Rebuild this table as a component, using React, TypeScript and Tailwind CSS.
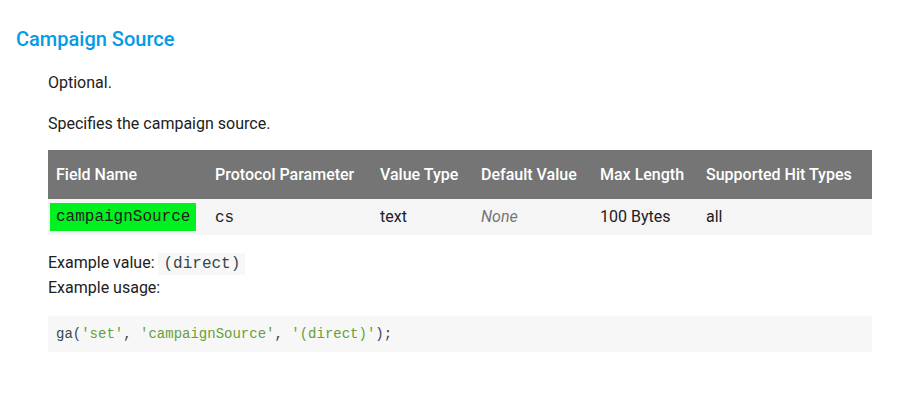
const cols = [
  { head: 'Field Name', w: 'w-[159px]' },
  { head: 'Protocol Parameter', w: 'w-[165px]' },
  { head: 'Value Type', w: 'w-[101px]' },
  { head: 'Default Value', w: 'w-[119px]' },
  { head: 'Max Length', w: 'w-[106px]' },
  { head: 'Supported Hit Types', w: '' },
]

export default function App() {
  return (
    <div className="min-h-[397px] bg-white font-['Roboto',sans-serif] text-[16px] text-[#212121]">
      <div className="pt-[27px] pl-4">
        <h3 className="text-[20px] font-medium leading-6 text-[#039be5]">Campaign Source</h3>
      </div>
      <div className="pl-12 pr-[25px]">
        <p className="mt-[20px] leading-6">Optional.</p>
        <p className="mt-[17px] leading-6">Specifies the campaign source.</p>

        <table className="mt-[14px] w-full border-collapse text-left">
          <thead>
            <tr className="h-[49px] bg-[#757575] text-white">
              {cols.map((c) => (
                <th key={c.head} className={`${c.w} px-2 font-medium`}>
                  {c.head}
                </th>
              ))}
            </tr>
          </thead>
          <tbody>
            <tr className="h-[36px] bg-[#f5f5f5]">
              <td className="px-[2px]">
                <code className="inline-block bg-[#00f020] px-[6px] py-[3px] font-['Liberation_Mono',monospace] text-[16px] leading-[22px] text-[#212121]">
                  campaignSource
                </code>
              </td>
              <td className="px-2">
                <code className="font-['Liberation_Mono',monospace] text-[16px]">cs</code>
              </td>
              <td className="px-2">text</td>
              <td className="px-2 italic text-[#757575]">None</td>
              <td className="px-2">100 Bytes</td>
              <td className="px-2">all</td>
            </tr>
          </tbody>
        </table>

        <div className="mt-[16px] leading-6">
          <div>
            Example value:{' '}
            <code className="bg-[#f7f7f7] px-[5px] py-[2px] font-['Liberation_Mono',monospace] text-[16px] text-[#37474f]">
              (direct)
            </code>
          </div>
          <div>Example usage:</div>
        </div>

        <pre className="mt-[16px] h-[36px] bg-[#f7f7f7] px-2 font-['Liberation_Mono',monospace] text-[14px] leading-[36px] text-[#37474f]">
          <span>ga(</span>
          <span className="text-[#689f38]">'set'</span>
          <span>, </span>
          <span className="text-[#689f38]">'campaignSource'</span>
          <span>, </span>
          <span className="text-[#689f38]">'(direct)'</span>
          <span>);</span>
        </pre>
      </div>
    </div>
  )
}
